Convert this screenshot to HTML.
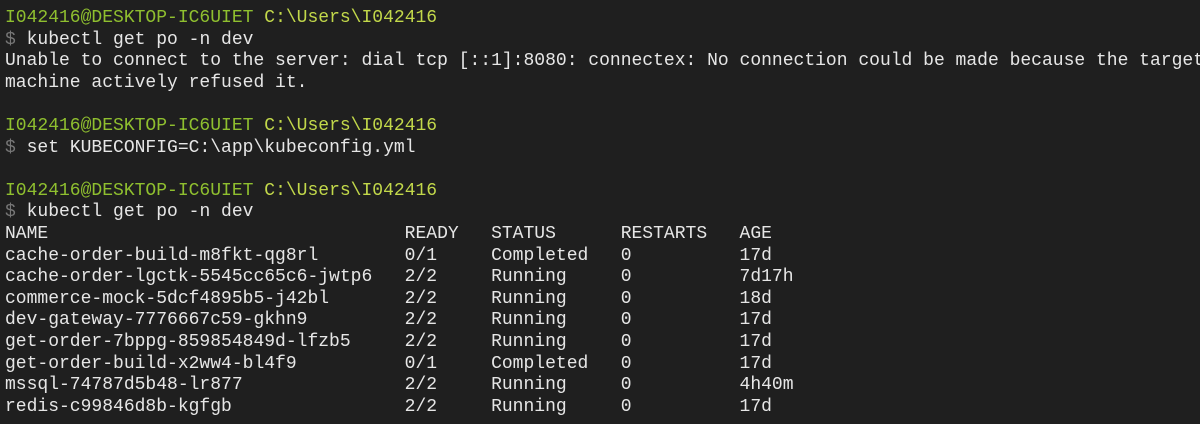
<html><head><style>
body{margin:0;background:#1f1f1f;width:1200px;height:424px;overflow:hidden}
pre{margin:0;padding:8px 0 0 5px;font-family:"Liberation Mono","DejaVu Sans Mono",monospace;font-size:18px;line-height:21.6px;color:#e6e6e6;white-space:pre}
.g{color:#8fbf2f}.y{color:#c2d84a}.d{color:#777}
</style></head><body><pre><span class="g">I042416@DESKTOP-IC6UIET</span> <span class="y">C:\Users\I042416</span>
<span class="d">$</span> kubectl get po -n dev
Unable to connect to the server: dial tcp [::1]:8080: connectex: No connection could be made because the target
machine actively refused it.

<span class="g">I042416@DESKTOP-IC6UIET</span> <span class="y">C:\Users\I042416</span>
<span class="d">$</span> set KUBECONFIG=C:\app\kubeconfig.yml

<span class="g">I042416@DESKTOP-IC6UIET</span> <span class="y">C:\Users\I042416</span>
<span class="d">$</span> kubectl get po -n dev
NAME                                 READY   STATUS      RESTARTS   AGE
cache-order-build-m8fkt-qg8rl        0/1     Completed   0          17d
cache-order-lgctk-5545cc65c6-jwtp6   2/2     Running     0          7d17h
commerce-mock-5dcf4895b5-j42bl       2/2     Running     0          18d
dev-gateway-7776667c59-gkhn9         2/2     Running     0          17d
get-order-7bppg-859854849d-lfzb5     2/2     Running     0          17d
get-order-build-x2ww4-bl4f9          0/1     Completed   0          17d
mssql-74787d5b48-lr877               2/2     Running     0          4h40m
redis-c99846d8b-kgfgb                2/2     Running     0          17d
</pre></body></html>
